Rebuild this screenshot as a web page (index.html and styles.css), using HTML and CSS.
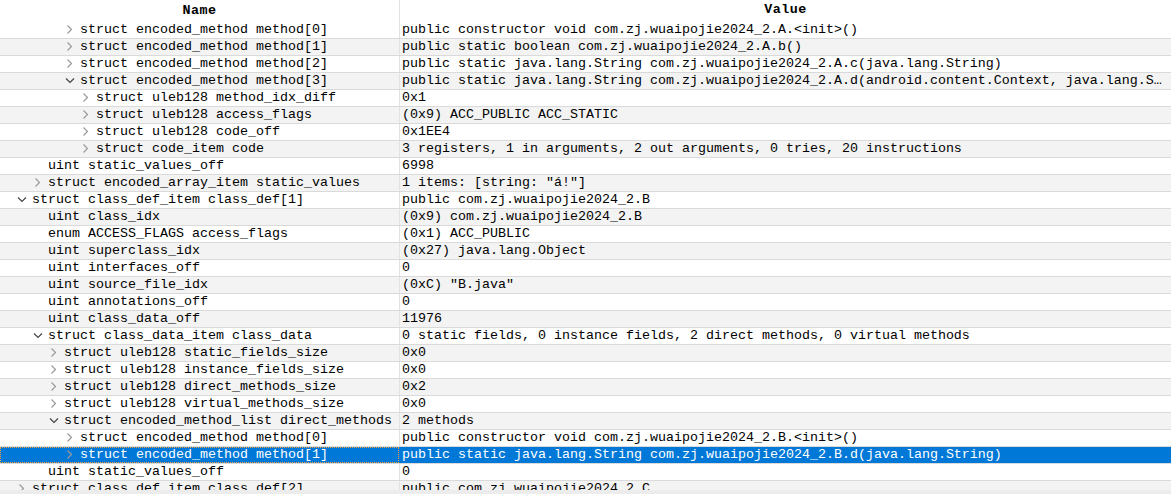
FILE: index.html
```html
<!DOCTYPE html>
<html>
<head>
<meta charset="utf-8">
<link rel="stylesheet" href="styles.css">
</head>
<body>
<div class="view">
  <div class="table">
    <div class="row head">
      <div class="name hname">Name</div>
      <div class="value hvalue">Value</div>
    </div>

    <div class="row"><div class="name l3"><span class="tg"><svg class="cr" viewBox="0 0 16 16"><path d="M3.5 3.5 L7.5 7.5 L3.5 11.5"/></svg></span>struct encoded_method method[0]</div><div class="value">public constructor void com.zj.wuaipojie2024_2.A.&lt;init&gt;()</div></div>
    <div class="row"><div class="name l3"><span class="tg"><svg class="cr" viewBox="0 0 16 16"><path d="M3.5 3.5 L7.5 7.5 L3.5 11.5"/></svg></span>struct encoded_method method[1]</div><div class="value">public static boolean com.zj.wuaipojie2024_2.A.b()</div></div>
    <div class="row"><div class="name l3"><span class="tg"><svg class="cr" viewBox="0 0 16 16"><path d="M3.5 3.5 L7.5 7.5 L3.5 11.5"/></svg></span>struct encoded_method method[2]</div><div class="value">public static java.lang.String com.zj.wuaipojie2024_2.A.c(java.lang.String)</div></div>
    <div class="row"><div class="name l3"><span class="tg"><svg class="cd" viewBox="0 0 16 16"><path d="M2 5.5 L6 9.5 L10 5.5"/></svg></span>struct encoded_method method[3]</div><div class="value">public static java.lang.String com.zj.wuaipojie2024_2.A.d(android.content.Context, java.lang.S…</div></div>
    <div class="row"><div class="name l4"><span class="tg"><svg class="cr" viewBox="0 0 16 16"><path d="M3.5 3.5 L7.5 7.5 L3.5 11.5"/></svg></span>struct uleb128 method_idx_diff</div><div class="value">0x1</div></div>
    <div class="row"><div class="name l4"><span class="tg"><svg class="cr" viewBox="0 0 16 16"><path d="M3.5 3.5 L7.5 7.5 L3.5 11.5"/></svg></span>struct uleb128 access_flags</div><div class="value">(0x9) ACC_PUBLIC ACC_STATIC</div></div>
    <div class="row"><div class="name l4"><span class="tg"><svg class="cr" viewBox="0 0 16 16"><path d="M3.5 3.5 L7.5 7.5 L3.5 11.5"/></svg></span>struct uleb128 code_off</div><div class="value">0x1EE4</div></div>
    <div class="row"><div class="name l4"><span class="tg"><svg class="cr" viewBox="0 0 16 16"><path d="M3.5 3.5 L7.5 7.5 L3.5 11.5"/></svg></span>struct code_item code</div><div class="value">3 registers, 1 in arguments, 2 out arguments, 0 tries, 20 instructions</div></div>
    <div class="row"><div class="name l1"><span class="tg"></span>uint static_values_off</div><div class="value">6998</div></div>
    <div class="row"><div class="name l1"><span class="tg"><svg class="cr" viewBox="0 0 16 16"><path d="M3.5 3.5 L7.5 7.5 L3.5 11.5"/></svg></span>struct encoded_array_item static_values</div><div class="value">1 items: [string: "á!"]</div></div>
    <div class="row"><div class="name l0"><span class="tg"><svg class="cd" viewBox="0 0 16 16"><path d="M2 5.5 L6 9.5 L10 5.5"/></svg></span>struct class_def_item class_def[1]</div><div class="value">public com.zj.wuaipojie2024_2.B</div></div>
    <div class="row"><div class="name l1"><span class="tg"></span>uint class_idx</div><div class="value">(0x9) com.zj.wuaipojie2024_2.B</div></div>
    <div class="row"><div class="name l1"><span class="tg"></span>enum ACCESS_FLAGS access_flags</div><div class="value">(0x1) ACC_PUBLIC</div></div>
    <div class="row"><div class="name l1"><span class="tg"></span>uint superclass_idx</div><div class="value">(0x27) java.lang.Object</div></div>
    <div class="row"><div class="name l1"><span class="tg"></span>uint interfaces_off</div><div class="value">0</div></div>
    <div class="row"><div class="name l1"><span class="tg"></span>uint source_file_idx</div><div class="value">(0xC) "B.java"</div></div>
    <div class="row"><div class="name l1"><span class="tg"></span>uint annotations_off</div><div class="value">0</div></div>
    <div class="row"><div class="name l1"><span class="tg"></span>uint class_data_off</div><div class="value">11976</div></div>
    <div class="row"><div class="name l1"><span class="tg"><svg class="cd" viewBox="0 0 16 16"><path d="M2 5.5 L6 9.5 L10 5.5"/></svg></span>struct class_data_item class_data</div><div class="value">0 static fields, 0 instance fields, 2 direct methods, 0 virtual methods</div></div>
    <div class="row"><div class="name l2"><span class="tg"><svg class="cr" viewBox="0 0 16 16"><path d="M3.5 3.5 L7.5 7.5 L3.5 11.5"/></svg></span>struct uleb128 static_fields_size</div><div class="value">0x0</div></div>
    <div class="row"><div class="name l2"><span class="tg"><svg class="cr" viewBox="0 0 16 16"><path d="M3.5 3.5 L7.5 7.5 L3.5 11.5"/></svg></span>struct uleb128 instance_fields_size</div><div class="value">0x0</div></div>
    <div class="row"><div class="name l2"><span class="tg"><svg class="cr" viewBox="0 0 16 16"><path d="M3.5 3.5 L7.5 7.5 L3.5 11.5"/></svg></span>struct uleb128 direct_methods_size</div><div class="value">0x2</div></div>
    <div class="row"><div class="name l2"><span class="tg"><svg class="cr" viewBox="0 0 16 16"><path d="M3.5 3.5 L7.5 7.5 L3.5 11.5"/></svg></span>struct uleb128 virtual_methods_size</div><div class="value">0x0</div></div>
    <div class="row"><div class="name l2"><span class="tg"><svg class="cd" viewBox="0 0 16 16"><path d="M2 5.5 L6 9.5 L10 5.5"/></svg></span>struct encoded_method_list direct_methods</div><div class="value">2 methods</div></div>
    <div class="row"><div class="name l3"><span class="tg"><svg class="cr" viewBox="0 0 16 16"><path d="M3.5 3.5 L7.5 7.5 L3.5 11.5"/></svg></span>struct encoded_method method[0]</div><div class="value">public constructor void com.zj.wuaipojie2024_2.B.&lt;init&gt;()</div></div>
    <div class="row sel"><div class="name l3"><span class="tg"><svg class="cr" viewBox="0 0 16 16"><path d="M3.5 3.5 L7.5 7.5 L3.5 11.5"/></svg></span>struct encoded_method method[1]</div><div class="value">public static java.lang.String com.zj.wuaipojie2024_2.B.d(java.lang.String)</div></div>
    <div class="row"><div class="name l1"><span class="tg"></span>uint static_values_off</div><div class="value">0</div></div>
    <div class="row"><div class="name l0"><span class="tg"><svg class="cr" viewBox="0 0 16 16"><path d="M3.5 3.5 L7.5 7.5 L3.5 11.5"/></svg></span>struct class_def_item class_def[2]</div><div class="value">public com.zj.wuaipojie2024_2.C</div></div>
  </div>
  <div class="hscroll"></div>
</div>
</body>
</html>
```
FILE: styles.css
```css
html, body {
  margin: 0;
  padding: 0;
  background: #ffffff;
  overflow: hidden;
}
.view {
  width: 1171px;
  height: 494px;
  display: flex;
  flex-direction: column;
}
.table {
  height: 490px;
  overflow: hidden;
  font-family: "Liberation Mono", "DejaVu Sans Mono", monospace;
  font-size: 13.33px;
  color: #000;
}
.hscroll {
  height: 4px;
  background: #ececec;
}
.row {
  display: grid;
  grid-template-columns: 399px 1fr;
  height: 16px;
  line-height: 16px;
  border-bottom: 1px solid #dadada;
  white-space: nowrap;
}
.row:nth-child(odd) {
  background: #f3f3f3;
}
.row.head {
  height: 22px;
  line-height: 20px;
  background: #ffffff;
  border-bottom: none;
}
.name {
  display: flex;
  align-items: center;
  overflow: hidden;
}
.value {
  border-left: 1px solid #e2e2e2;
  padding-left: 2px;
  overflow: hidden;
}
.hname, .hvalue {
  justify-content: center;
  text-align: center;
  font-weight: bold;
  letter-spacing: 0.5px;
  padding-left: 0;
}
.l0 { padding-left: 16px; }
.l1 { padding-left: 32px; }
.l2 { padding-left: 48px; }
.l3 { padding-left: 64px; }
.l4 { padding-left: 80px; }
.tg {
  width: 16px;
  height: 16px;
  flex: none;
  display: flex;
}
.tg svg {
  width: 16px;
  height: 16px;
  fill: none;
  stroke-width: 1.2;
}
.cr { stroke: #9a9a9a; }
.cd { stroke: #444444; }
.row.sel {
  background: #0078d7;
  color: #ffffff;
}
.row.sel .name {
  outline: 1px dotted #f0a040;
  outline-offset: -1px;
}
.row.sel .value {
  border-left-color: #0078d7;
}
```
